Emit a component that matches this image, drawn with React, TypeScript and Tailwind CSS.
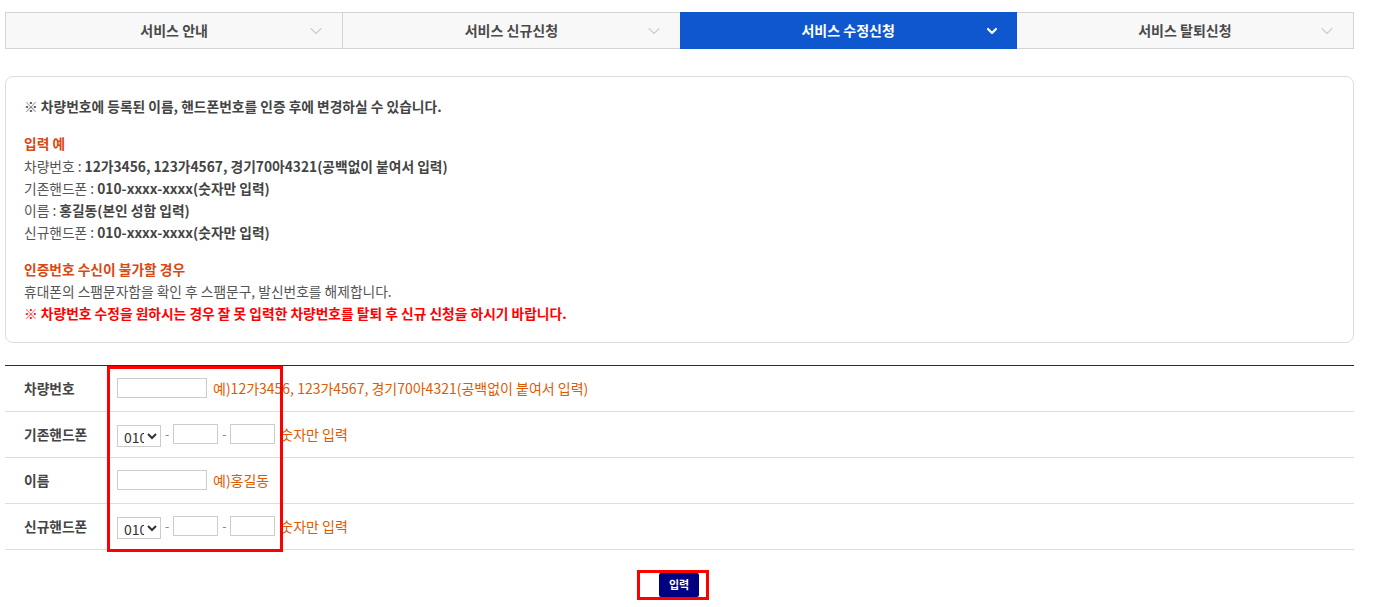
import React from 'react'
import { ChevronDown } from 'lucide-react'

const tabs = [
  { id: 'guide', name: '서비스 안내' },
  { id: 'new', name: '서비스 신규신청' },
  { id: 'edit', name: '서비스 수정신청' },
  { id: 'leave', name: '서비스 탈퇴신청' },
]

function PhoneFields() {
  return (
    <div className="flex items-center">
      <select
        defaultValue="010"
        className="w-[44px] h-[22px] border border-[#ccc] bg-white text-[14px] text-[#333] pl-[2px] mt-[4px]"
      >
        <option value="010">010</option>
        <option value="011">011</option>
        <option value="016">016</option>
      </select>
      <span className="mx-[4px] text-[12px] text-[#777]">-</span>
      <input className="w-[45px] h-[20px] border border-[#ccc]" />
      <span className="mx-[4px] text-[12px] text-[#777]">-</span>
      <input className="w-[45px] h-[20px] border border-[#ccc]" />
      <span className="ml-[5px] text-[14px] text-[#e05a00]">숫자만 입력</span>
    </div>
  )
}

export default function App() {
  const active = 'edit'

  return (
    <div
      className="w-[1354px] pl-[5px] pt-[12px] bg-white text-[#444] text-[13.75px]"
      style={{ fontFamily: '"Noto Sans CJK KR", "Noto Sans", sans-serif' }}
    >
      {/* 탭 */}
      <div className="grid grid-cols-4 h-[37px]">
        {tabs.map((tab, i) => {
          const on = tab.id === active
          return (
            <div
              key={tab.id}
              className={`relative flex items-center justify-center font-bold text-[14px] ${
                on
                  ? 'bg-[#0f57ce] text-white'
                  : `bg-[#f8f8f8] text-[#4a4a4a] border-y border-[#d5d5d5] ${i === 0 ? 'border-l' : ''} ${i === 3 ? 'border-r' : ''} ${i === 1 ? 'border-l' : ''}`
              }`}
            >
              {tab.name}
              {on ? (
                <ChevronDown className="absolute right-[17px] w-[16px] h-[16px] text-white" strokeWidth={3.25} />
              ) : (
                <ChevronDown className="absolute right-[16px] w-[20px] h-[20px] text-[#cfcfcf]" strokeWidth={1.4} />
              )}
            </div>
          )
        })}
      </div>

      {/* 안내 */}
      <div className="mt-[27px] border border-[#ddd] rounded-[8px] px-[18px] pt-[18px] pb-[17px] leading-[22.3px] text-[13.75px] text-[#555]">
        <p className="font-bold text-[#444]">※ 차량번호에 등록된 이름, 핸드폰번호를 인증 후에 변경하실 수 있습니다.</p>
        <div className="mt-[15px]">
          <p className="font-bold text-[#d9480f]">입력 예</p>
          <p>
            차량번호 : <b className="text-[#444]">12가3456, 123가4567, 경기70아4321(공백없이 붙여서 입력)</b>
          </p>
          <p>
            기존핸드폰 : <b className="text-[#444]">010-xxxx-xxxx(숫자만 입력)</b>
          </p>
          <p>
            이름 : <b className="text-[#444]">홍길동(본인 성함 입력)</b>
          </p>
          <p>
            신규핸드폰 : <b className="text-[#444]">010-xxxx-xxxx(숫자만 입력)</b>
          </p>
        </div>
        <div className="mt-[14px]">
          <p className="font-bold text-[#d9480f]">인증번호 수신이 불가할 경우</p>
          <p>휴대폰의 스팸문자함을 확인 후 스팸문구, 발신번호를 해제합니다.</p>
          <p className="font-bold text-[#ff0000]">
            ※ 차량번호 수정을 원하시는 경우 잘 못 입력한 차량번호를 탈퇴 후 신규 신청을 하시기 바랍니다.
          </p>
        </div>
      </div>

      {/* 입력 폼 */}
      <div className="relative mt-[22px] border-t border-[#1f1f96]">
        {[
          {
            label: '차량번호',
            field: (
              <div className="flex items-center">
                <input className="w-[90px] h-[20px] border border-[#ccc]" />
                <span className="ml-[6px] text-[14px] text-[#e05a00]">
                  예)12가3456, 123가4567, 경기70아4321(공백없이 붙여서 입력)
                </span>
              </div>
            ),
          },
          { label: '기존핸드폰', field: <PhoneFields /> },
          {
            label: '이름',
            field: (
              <div className="flex items-center">
                <input className="w-[90px] h-[20px] border border-[#ccc]" />
                <span className="ml-[6px] text-[14px] text-[#e05a00]">예)홍길동</span>
              </div>
            ),
          },
          { label: '신규핸드폰', field: <PhoneFields /> },
        ].map((row) => (
          <div key={row.label} className="flex items-center h-[46px] border-b border-[#ddd]">
            <div className="w-[112px] pl-[19px] font-bold text-[13.75px] text-[#444]">{row.label}</div>
            {row.field}
          </div>
        ))}

        {/* 강조 표시 */}
        <div className="absolute left-[102px] top-0 w-[176px] h-[186px] border-[3px] border-[#ff0000] pointer-events-none" />
      </div>

      {/* 버튼 */}
      <div className="pt-[20px] pb-[7px] border-b-2 border-[#bbb] pl-[632px]">
        <div className="w-[72px] h-[30px] border-[3px] border-[#ff0000] flex items-center justify-end pr-[7px]">
          <button className="w-[40px] h-[24px] bg-[#000080] text-white text-[11px] font-bold rounded-[2px]">입력</button>
        </div>
      </div>
    </div>
  )
}
